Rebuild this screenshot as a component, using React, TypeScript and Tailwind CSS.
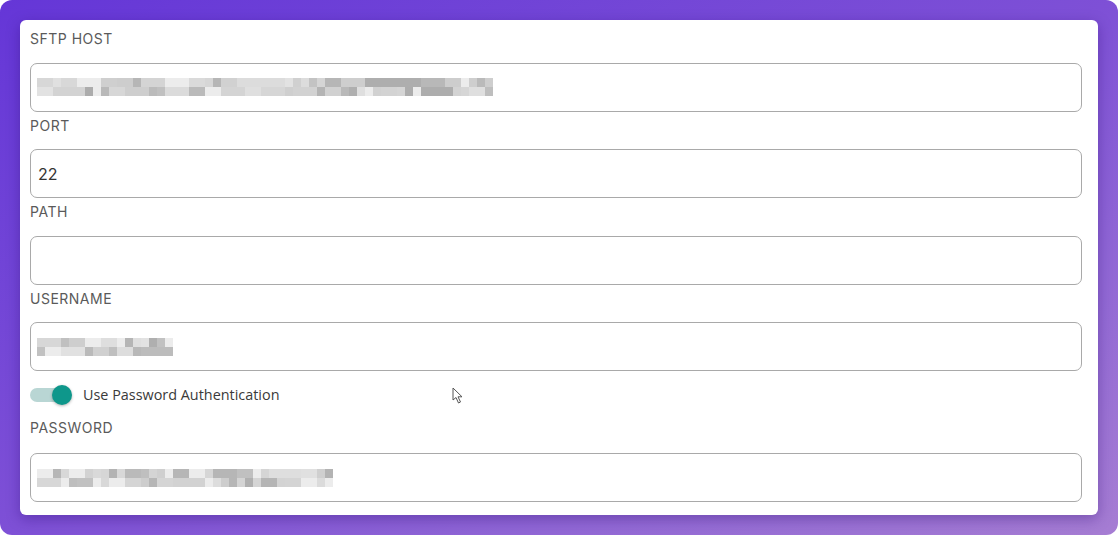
import type { ReactNode } from 'react';

// pixelated placeholder for the blurred values in the screenshot
function Mosaic({ seed, cols }: { seed: number; cols: number }) {
  let s = seed;
  const next = () => {
    s = (s * 9301 + 49297) % 233280;
    return s / 233280;
  };
  const rows = [0, 1].map(() => {
    const out: string[] = [];
    let v = 215;
    for (let i = 0; i < cols; i++) {
      // keep short runs of similar shade, like a downscaled blur
      if (next() < 0.6) {
        const r = next();
        v = r < 0.2 ? 236 : r < 0.75 ? 205 + Math.floor(next() * 22) : 172 + Math.floor(next() * 25);
      }
      out.push(`rgb(${v},${v},${v})`);
    }
    return out;
  });
  return (
    <div className="flex flex-col">
      {rows.map((row, i) => (
        <div key={i} className="flex">
          {row.map((c, j) => (
            <div key={j} className="w-[8px] h-[9px]" style={{ backgroundColor: c }} />
          ))}
        </div>
      ))}
    </div>
  );
}

function Field({ label, children, first }: { label: string; children?: ReactNode; first?: boolean }) {
  return (
    <div className={first ? '' : 'mt-[4px]'}>
      <div className="h-[20px] leading-[20px] text-[14px] text-[#5a5a5a] tracking-[0.5px]">{label}</div>
      <div className="mt-[13.5px] h-[49px] rounded-[7px] border-[1.5px] border-[#a9a9a9] bg-white flex items-center px-[6px]">
        {children}
      </div>
    </div>
  );
}

export default function App() {
  return (
    <div className="w-[1118px] h-[535px] bg-white">
      <div className="w-full h-full rounded-[12px] bg-linear-to-br from-[#6536d7] via-[#7e50d6] to-[#a67dd3] p-[20px]">
        <div
          className="relative bg-white rounded-[6px] shadow-[0_4px_14px_rgba(40,10,110,0.35)] pl-[10px] pr-[16px] pt-[9px] pb-[13px]"
          style={{ fontFamily: 'Inter, "Noto Sans", sans-serif' }}
        >
          <Field label="SFTP HOST" first>
            <Mosaic seed={17} cols={57} />
          </Field>
          <Field label="PORT">
            <span className="text-[16px] text-[#333] pl-[1px]">22</span>
          </Field>
          <Field label="PATH" />
          <Field label="USERNAME">
            <Mosaic seed={91} cols={17} />
          </Field>

          <div className="mt-[12px] h-[24px] flex items-center">
            <div className="relative w-[40px] h-[14px] rounded-full bg-[#b9d6d4]">
              <div className="absolute right-[-2px] top-[-3px] w-[20px] h-[20px] rounded-full bg-[#0e978b] shadow-[0_1px_3px_rgba(0,0,0,0.3)]" />
            </div>
            <span
              className="ml-[13px] text-[14.4px] text-[#3a3a3a]"
              style={{ fontFamily: '"Open Sans", "Noto Sans", sans-serif' }}
            >
              Use Password Authentication
            </span>
          </div>

          <div className="mt-[11px]">
            <div className="h-[20px] leading-[20px] text-[14px] text-[#5a5a5a] tracking-[0.5px]">PASSWORD</div>
            <div className="mt-[15px] h-[49px] rounded-[7px] border-[1.5px] border-[#a9a9a9] bg-white flex items-center px-[6px]">
              <Mosaic seed={53} cols={37} />
            </div>
          </div>

          {/* mouse pointer */}
          <svg
            className="absolute left-[432px] top-[367px]"
            width="12"
            height="17"
            viewBox="0 0 12 17"
          >
            <path
              d="M1 1 L1 13 L4 10.5 L6.5 16 L8.5 15 L6 9.8 L10 9.8 Z"
              fill="#fff"
              stroke="#555"
              strokeWidth="1"
              strokeLinejoin="round"
            />
          </svg>
        </div>
      </div>
    </div>
  );
}
